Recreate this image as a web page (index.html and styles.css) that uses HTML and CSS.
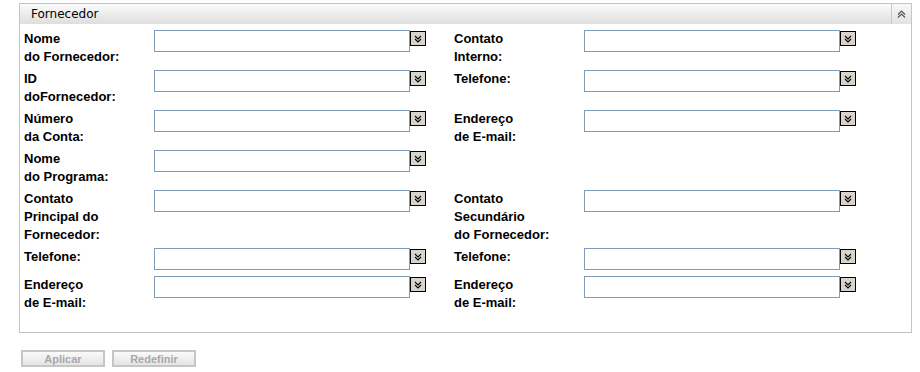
FILE: index.html
```html
<!DOCTYPE html>
<html lang="pt">
<head>
    <meta charset="UTF-8">
    <title>Fornecedor</title>
    <link rel="stylesheet" href="styles.css">
</head>
<body>
    <div class="panel">
        <div class="panel-header">
            <span class="panel-title">Fornecedor</span>
            <button class="collapse" title="Recolher">
                <svg width="9" height="8" viewBox="0 0 9 8"><path d="M1 4.5 L4.5 1 L8 4.5 M1 7.5 L4.5 4 L8 7.5" fill="none" stroke="#555" stroke-width="1.2"/></svg>
            </button>
        </div>
        <div class="panel-body">
            <div class="form-grid">
                <label class="lbl">Nome<br>do Fornecedor:</label>
                <div class="field"><input type="text"><span class="pick"></span></div>
                <label class="lbl">Contato<br>Interno:</label>
                <div class="field"><input type="text"><span class="pick"></span></div>

                <label class="lbl">ID<br>doFornecedor:</label>
                <div class="field"><input type="text"><span class="pick"></span></div>
                <label class="lbl">Telefone:</label>
                <div class="field"><input type="text"><span class="pick"></span></div>

                <label class="lbl">Número<br>da Conta:</label>
                <div class="field"><input type="text"><span class="pick"></span></div>
                <label class="lbl">Endereço<br>de E-mail:</label>
                <div class="field"><input type="text"><span class="pick"></span></div>

                <label class="lbl">Nome<br>do Programa:</label>
                <div class="field"><input type="text"><span class="pick"></span></div>
                <div></div>
                <div></div>

                <label class="lbl">Contato<br>Principal do<br>Fornecedor:</label>
                <div class="field"><input type="text"><span class="pick"></span></div>
                <label class="lbl">Contato<br>Secundário<br>do Fornecedor:</label>
                <div class="field"><input type="text"><span class="pick"></span></div>

                <label class="lbl">Telefone:</label>
                <div class="field"><input type="text"><span class="pick"></span></div>
                <label class="lbl">Telefone:</label>
                <div class="field"><input type="text"><span class="pick"></span></div>

                <label class="lbl">Endereço<br>de E-mail:</label>
                <div class="field"><input type="text"><span class="pick"></span></div>
                <label class="lbl">Endereço<br>de E-mail:</label>
                <div class="field"><input type="text"><span class="pick"></span></div>
            </div>
        </div>
    </div>
    <div class="actions">
        <button class="btn" disabled>Aplicar</button>
        <button class="btn" disabled>Redefinir</button>
    </div>

    <script>
        // same double-chevron icon for every picker button
        const chevrons = '<svg width="10" height="8" viewBox="0 0 10 8"><path d="M2 1 L5 4 L8 1 M2 4 L5 7 L8 4" fill="none" stroke="#000" stroke-width="1.1"/></svg>';
        document.querySelectorAll(".pick").forEach(p => p.innerHTML = chevrons);
    </script>
</body>
</html>
```

FILE: styles.css
```css
body {
    margin: 0;
    padding: 3px 8px 0 19px;
    background-color: #ffffff;
    font-family: "DejaVu Sans", sans-serif;
    color: #000;
}

.panel {
    width: 891px;
    border: 1px solid #c4c4c4;
}

.panel-header {
    display: flex;
    align-items: center;
    height: 20px;
    background: linear-gradient(#fbfbfb, #dedede);
}

.panel-title {
    flex: 1;
    padding-left: 11px;
    font-size: 12px;
    color: #000;
}

.collapse {
    width: 20px;
    height: 20px;
    padding: 0;
    border: none;
    border-left: 1px solid #c8c8c8;
    background: linear-gradient(#f8f8f8, #e2e2e2);
    display: flex;
    align-items: center;
    justify-content: center;
}

.panel-body {
    padding: 6px 0 20px 4px;
}

.form-grid {
    display: grid;
    grid-template-columns: 130px 300px 130px 1fr;
    row-gap: 4px;
    align-items: start;
}

.lbl {
    font-family: "Liberation Sans", Arial, sans-serif;
    font-weight: bold;
    font-size: 13px;
    line-height: 18px;
    color: #000;
}

.field {
    display: flex;
    align-items: flex-start;
    height: 24px;
}

.field input {
    box-sizing: border-box;
    width: 256px;
    height: 22px;
    margin: 0;
    border: 1px solid #7f9db9;
    background: #fff;
}

.pick {
    box-sizing: border-box;
    width: 16px;
    height: 15px;
    margin-top: 1px;
    border: 1px solid #000;
    background-color: #d8d4cc;
    display: flex;
    align-items: center;
    justify-content: center;
}

.pick svg {
    display: block;
}

.actions {
    display: flex;
    gap: 7px;
    margin-top: 17px;
    padding-left: 2px;
}

.btn {
    width: 84px;
    height: 17px;
    padding: 0;
    border: 2px solid #c6c6c2;
    background: linear-gradient(#fafafa, #e4e4e4);
    font-family: "Liberation Sans", Arial, sans-serif;
    font-weight: bold;
    font-size: 11px;
    color: #a8a8a8;
}
```
